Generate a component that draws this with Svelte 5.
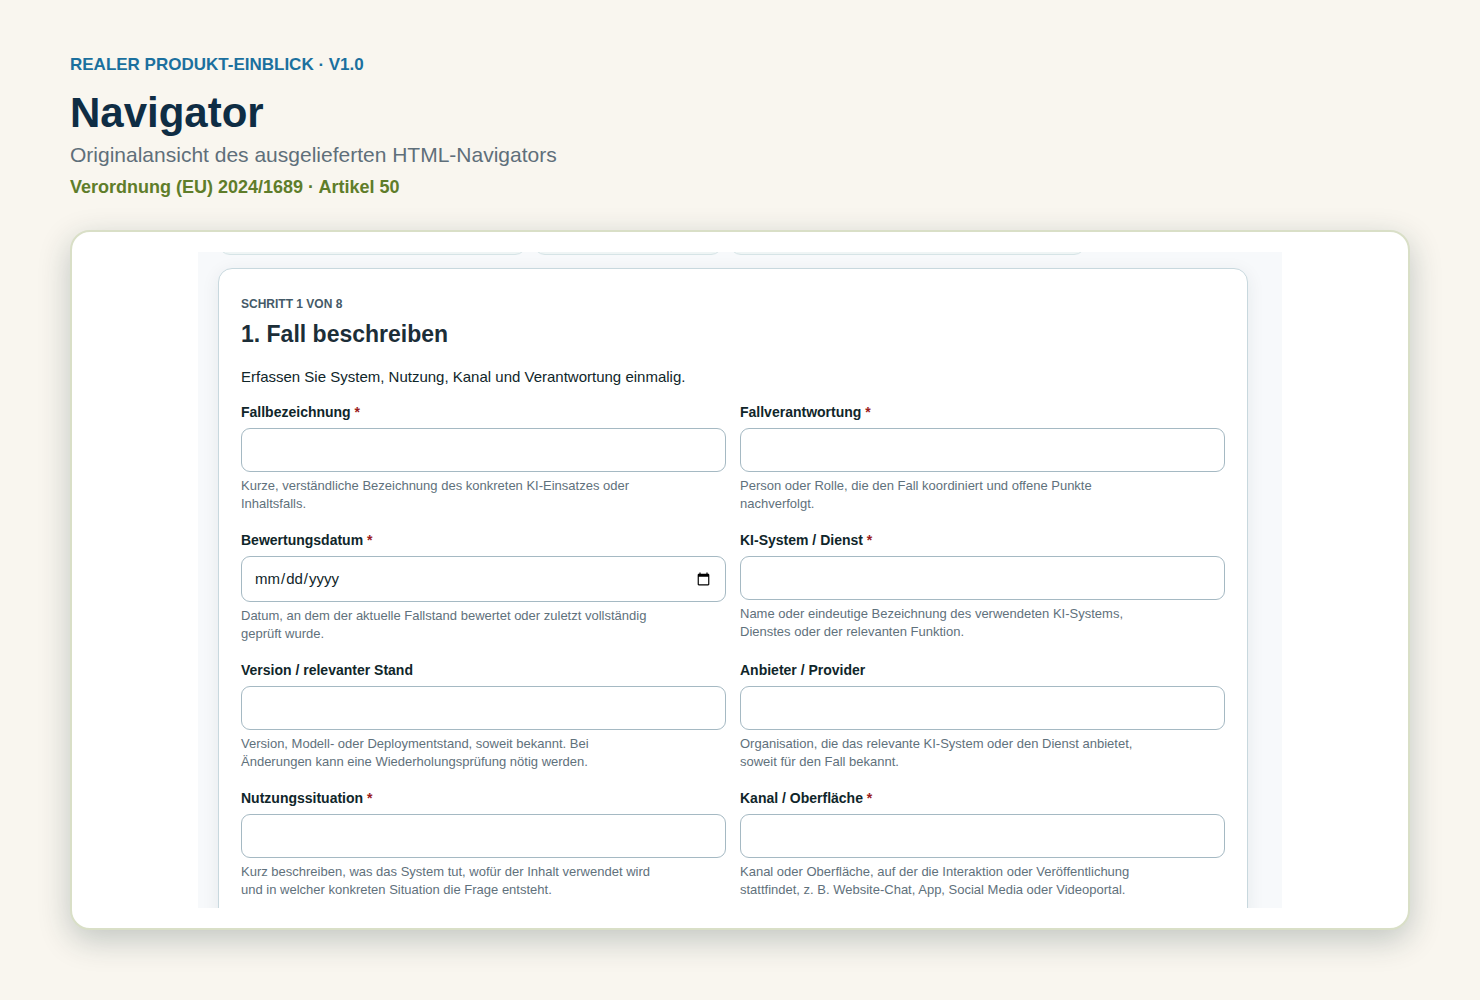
<script>
  // widths of the filter chips that peek in above the card
  const chips = [309, 190, 357];

  const fields = [
    {
      id: 'case-name',
      label: 'Fallbezeichnung',
      required: true,
      help: 'Kurze, verständliche Bezeichnung des konkreten KI-Einsatzes oder Inhaltsfalls.'
    },
    {
      id: 'case-owner',
      label: 'Fallverantwortung',
      required: true,
      help: 'Person oder Rolle, die den Fall koordiniert und offene Punkte nachverfolgt.'
    },
    {
      id: 'review-date',
      label: 'Bewertungsdatum',
      required: true,
      type: 'date',
      help: 'Datum, an dem der aktuelle Fallstand bewertet oder zuletzt vollständig geprüft wurde.'
    },
    {
      id: 'system',
      label: 'KI-System / Dienst',
      required: true,
      help: 'Name oder eindeutige Bezeichnung des verwendeten KI-Systems, Dienstes oder der relevanten Funktion.'
    },
    {
      id: 'version',
      label: 'Version / relevanter Stand',
      help: 'Version, Modell- oder Deploymentstand, soweit bekannt. Bei Änderungen kann eine Wiederholungsprüfung nötig werden.'
    },
    {
      id: 'provider',
      label: 'Anbieter / Provider',
      help: 'Organisation, die das relevante KI-System oder den Dienst anbietet, soweit für den Fall bekannt.'
    },
    {
      id: 'usage',
      label: 'Nutzungssituation',
      required: true,
      help: 'Kurz beschreiben, was das System tut, wofür der Inhalt verwendet wird und in welcher konkreten Situation die Frage entsteht.'
    },
    {
      id: 'channel',
      label: 'Kanal / Oberfläche',
      required: true,
      help: 'Kanal oder Oberfläche, auf der die Interaktion oder Veröffentlichung stattfindet, z. B. Website-Chat, App, Social Media oder Videoportal.'
    }
  ];

  let values = $state({});
</script>

<main class="page">
  <header class="intro">
    <p class="eyebrow">REALER PRODUKT-EINBLICK · V1.0</p>
    <h1>Navigator</h1>
    <p class="subtitle">Originalansicht des ausgelieferten HTML-Navigators</p>
    <p class="law">Verordnung (EU) 2024/1689 · Artikel 50</p>
  </header>

  <section class="frame">
    <div class="preview">
      <div class="chips" aria-hidden="true">
        {#each chips as width}
          <span class="chip" style="width: {width}px"></span>
        {/each}
      </div>
      <form class="card" onsubmit={(e) => e.preventDefault()}>
        <p class="step">SCHRITT 1 VON 8</p>
        <h2>1. Fall beschreiben</h2>
        <p class="lead">Erfassen Sie System, Nutzung, Kanal und Verantwortung einmalig.</p>
        <div class="grid">
          {#each fields as f (f.id)}
            <div class="field">
              <label for={f.id}>{f.label}{#if f.required}<span class="req">&nbsp;*</span>{/if}</label>
              <input
                id={f.id}
                class:date={f.type === 'date'}
                type={f.type ?? 'text'}
                aria-describedby="{f.id}-help"
                aria-required={!!f.required}
                bind:value={values[f.id]}
              />
              <p class="help" id="{f.id}-help">{f.help}</p>
            </div>
          {/each}
        </div>
      </form>
    </div>
  </section>
</main>

<style>
:global(body) {
  margin: 0;
  background: #f9f6ef;
}
.page {
  box-sizing: border-box;
  height: 100vh;
  min-height: 480px;
  padding: 53px 70px 70px;
  display: flex;
  flex-direction: column;
  font-family: "Liberation Sans", Arial, sans-serif;
}
p, h1, h2 { margin: 0; }
.intro { margin-bottom: 30px; }
.eyebrow {
  font-size: 17px;
  line-height: 24px;
  font-weight: 700;
  color: #1b709e;
}
h1 {
  margin-top: 11px;
  font-size: 42px;
  line-height: 50px;
  color: #0f2d44;
}
.subtitle {
  margin-top: 4px;
  font-size: 21px;
  line-height: 26px;
  color: #5f6f7a;
}
.law {
  margin-top: 6px;
  font-size: 18px;
  line-height: 26px;
  font-weight: 700;
  color: #5f7d2a;
}
.frame {
  flex: 1;
  min-height: 0;
  padding: 20px;
  display: flex;
  justify-content: center;
  border: 2px solid #d9dfc7;
  border-radius: 20px;
  background: #fff;
  box-shadow: 0 10px 32px rgba(15, 45, 50, 0.24);
}
.preview {
  box-sizing: border-box;
  width: 100%;
  max-width: 1084px;
  padding: 0 34px 0 20px;
  overflow: hidden;
  background: #f7f9fb;
}
.chips {
  display: flex;
  gap: 6px;
  margin-top: -29px;
  margin-bottom: 13px;
}
.chip {
  box-sizing: border-box;
  height: 32px;
  border: 1px solid #d6e4e6;
  border-radius: 12px;
  background: #eff5f5;
}
.card {
  padding: 22px;
  border: 1px solid #c8d8de;
  border-radius: 14px;
  background: #fff;
  box-shadow: 0 4px 18px rgba(23, 50, 60, 0.08);
}
.step {
  margin-top: 4px;
  font-size: 12px;
  line-height: 18px;
  font-weight: 700;
  color: #455a68;
}
h2 {
  margin-top: 6px;
  font-size: 23px;
  line-height: 30px;
  color: #1c2e38;
}
.lead {
  margin-top: 16px;
  font-size: 15px;
  line-height: 24px;
  color: #10262a;
}
.grid {
  display: grid;
  grid-template-columns: 1fr 1fr;
  gap: 16px 14px;
  margin-top: 12px;
}
.field {
  display: flex;
  flex-direction: column;
}
label {
  margin-bottom: 5px;
  font-size: 14px;
  line-height: 22px;
  font-weight: 700;
  color: #10262a;
}
.req { color: #9b1c1c; }
input {
  box-sizing: border-box;
  width: 100%;
  height: 44px;
  padding: 0 12px;
  border: 1px solid #a5b9c3;
  border-radius: 9px;
  background: #fff;
  color: #10262a;
  font: 15px/24px "Liberation Sans", Arial, sans-serif;
}
input.date { height: 46px; }
input:focus {
  border-color: #1b709e;
  outline: none;
}
.help {
  max-width: 410px;
  margin-top: 5px;
  font-size: 13px;
  line-height: 18px;
  color: #5f717c;
}
@media (max-width: 760px) {
  .page { padding: 32px 20px; }
  .grid { grid-template-columns: 1fr; }
}
</style>
